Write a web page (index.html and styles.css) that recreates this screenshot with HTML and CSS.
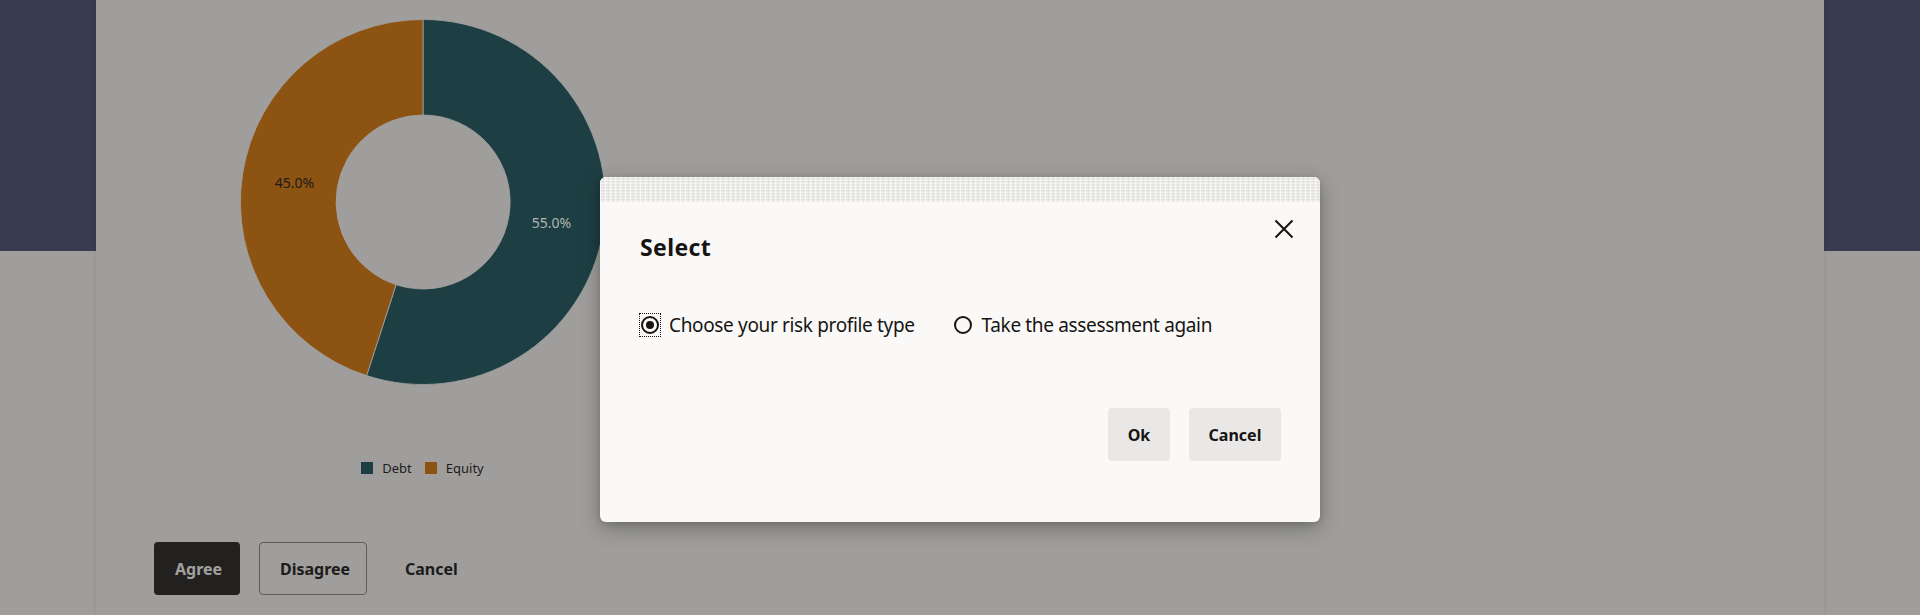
FILE: index.html
```html
<!DOCTYPE html>
<html lang="en">
<head>
<meta charset="utf-8">
<title>Risk profile</title>
<link rel="stylesheet" href="styles.css">
</head>
<body>
<div class="page">
  <main class="card">
    <section class="chart">
      <svg class="donut" width="366" height="366" viewBox="0 0 366 366">
        <path class="slice-debt" d="M183 0.5 A182.5 182.5 0 1 1 126.6 356.6 L156.1 265.7 A87 87 0 1 0 183 96 Z"/>
        <path class="slice-equity" d="M126.6 356.6 A182.5 182.5 0 0 1 183 0.5 L183 96 A87 87 0 0 0 156.1 265.7 Z"/>
        <text class="lbl lbl-dark" x="54.5" y="163">45.0%</text>
        <text class="lbl lbl-light" x="311.5" y="203.5">55.0%</text>
      </svg>
      <div class="legend">
        <span class="swatch swatch-debt"></span><span class="legend-text">Debt</span>
        <span class="swatch swatch-equity"></span><span class="legend-text">Equity</span>
      </div>
    </section>
    <div class="actions">
      <button class="btn btn-primary">Agree</button>
      <button class="btn btn-outline">Disagree</button>
      <button class="btn btn-ghost">Cancel</button>
    </div>
  </main>

  <div class="dialog" role="dialog" aria-labelledby="dlg-title">
    <div class="dialog-strip"></div>
    <div class="dialog-header">
      <h2 id="dlg-title" class="dialog-title">Select</h2>
      <button class="close" aria-label="Close">
        <svg width="24" height="24" viewBox="0 0 24 24"><path d="M3.5 3.5 L20.5 20.5 M20.5 3.5 L3.5 20.5" stroke="#161513" stroke-width="2" fill="none"/></svg>
      </button>
    </div>
    <div class="radio-row">
      <label class="radio">
        <span class="radio-focus"><span class="radio-circle checked"></span></span>
        <span class="radio-text">Choose your risk profile type</span>
      </label>
      <label class="radio">
        <span class="radio-focus plain"><span class="radio-circle"></span></span>
        <span class="radio-text">Take the assessment again</span>
      </label>
    </div>
    <div class="dialog-footer">
      <button class="dbtn dbtn-ok">Ok</button>
      <button class="dbtn dbtn-cancel">Cancel</button>
    </div>
  </div>
</div>
</body>
</html>
```

FILE: styles.css
```css
* { box-sizing: border-box; }

html, body {
  margin: 0;
  padding: 0;
}

body {
  width: 1920px;
  height: 615px;
  overflow: hidden;
  font-family: "Noto Sans", "Open Sans", sans-serif;
  background: linear-gradient(to bottom, #393c50 0, #393c50 251px, #9f9e9c 251px);
}

.page {
  position: relative;
  height: 615px;
}

.card {
  margin: 0 96px;
  height: 615px;
  background: #9f9e9c;
  box-shadow: 0 0 4px rgba(0, 0, 0, 0.09);
  padding-top: 19px;
}

.chart {
  width: 366px;
  margin-left: 143.5px;
  display: flex;
  flex-direction: column;
  align-items: center;
}

.donut { display: block; }

.slice-debt { fill: #1d3f43; stroke: #a3a2a0; stroke-width: 0.8; }
.slice-equity { fill: #8c5313; stroke: #a3a2a0; stroke-width: 0.8; }

.lbl {
  font-family: "Noto Sans", sans-serif;
  font-size: 14px;
  text-anchor: middle;
  dominant-baseline: central;
}
.lbl-dark { fill: #1d1c1a; }
.lbl-light { fill: #b4b3b1; }

.legend {
  margin-top: 75px;
  height: 16px;
  display: flex;
  align-items: center;
  font-size: 13px;
  color: #1d1c1a;
  line-height: 16px;
}

.swatch {
  width: 12px;
  height: 12px;
  display: inline-block;
}
.swatch-debt { background: #1d3f43; }
.swatch-equity { background: #8c5313; margin-left: 13px; }
.legend-text { margin-left: 9px; }

.actions {
  margin-top: 66px;
  padding-left: 58px;
  display: flex;
  gap: 19px;
}

.btn {
  height: 53px;
  padding: 0 20px;
  font-family: "Noto Sans", sans-serif;
  font-size: 16px;
  font-weight: 700;
  border-radius: 4px;
  border: 1px solid transparent;
  background: transparent;
  color: #1c1b19;
  cursor: pointer;
}
.btn-primary {
  background: #22211f;
  color: #a2a19f;
  width: 86px;
}
.btn-outline {
  border-color: #5d5d5c;
  width: 108px;
}
.btn-ghost {
  padding: 0 18px;
}

/* dialog (modal over the page) */
.dialog {
  position: absolute;
  left: 600px;
  top: 177px;
  width: 720px;
  height: 345px;
  background: #faf9f8;
  border-radius: 6px;
  overflow: hidden;
  box-shadow: 0 6px 22px rgba(0, 0, 0, 0.28), 0 2px 6px rgba(0, 0, 0, 0.12);
  display: flex;
  flex-direction: column;
}

.dialog-strip {
  height: 25px;
  flex: none;
  background-color: #ecebe9;
  background-image:
    repeating-linear-gradient(90deg, rgba(255,255,255,0.55) 0 1px, transparent 1px 3px, rgba(0,0,0,0.03) 3px 4px, transparent 4px 5px),
    repeating-linear-gradient(0deg, rgba(255,255,255,0.35) 0 1px, transparent 1px 2px, rgba(0,0,0,0.035) 2px 3px);
}

.dialog-header {
  display: flex;
  justify-content: space-between;
  align-items: flex-start;
  padding: 14px 24.5px 0 40px;
}

.dialog-title {
  margin: 15px 0 0;
  font-size: 23px;
  line-height: 32px;
  font-weight: 700;
  letter-spacing: 0.4px;
  color: #161513;
}

.close {
  width: 24px;
  height: 24px;
  padding: 0;
  margin-top: 0.5px;
  border: 0;
  background: transparent;
  display: block;
}
.close svg { display: block; }

.radio-row {
  margin-top: 50px;
  padding-left: 39px;
  display: flex;
  gap: 37px;
  height: 24px;
}

.radio {
  display: flex;
  align-items: center;
  height: 24px;
}

.radio-focus {
  width: 22px;
  height: 24px;
  border: 1px dotted #161513;
  display: flex;
  align-items: center;
  justify-content: center;
}
.radio-focus.plain { border-color: transparent; }

.radio-circle {
  width: 18px;
  height: 18px;
  border: 2px solid #161513;
  border-radius: 50%;
  display: flex;
  align-items: center;
  justify-content: center;
}
.radio-circle.checked::after {
  content: "";
  width: 8px;
  height: 8px;
  border-radius: 50%;
  background: #161513;
}

.radio-text {
  margin-left: 8px;
  font-size: 19px;
  letter-spacing: -0.35px;
  line-height: 24px;
  color: #161513;
}

.dialog-footer {
  margin-top: 71px;
  padding-right: 39px;
  display: flex;
  justify-content: flex-end;
  gap: 19px;
}

.dbtn {
  height: 53px;
  padding: 0;
  border: 0;
  border-radius: 4px;
  background: #e9e8e6;
  font-family: "Noto Sans", sans-serif;
  font-size: 16px;
  font-weight: 700;
  color: #161513;
}
.dbtn-ok { width: 62px; }
.dbtn-cancel { width: 92px; }
```
